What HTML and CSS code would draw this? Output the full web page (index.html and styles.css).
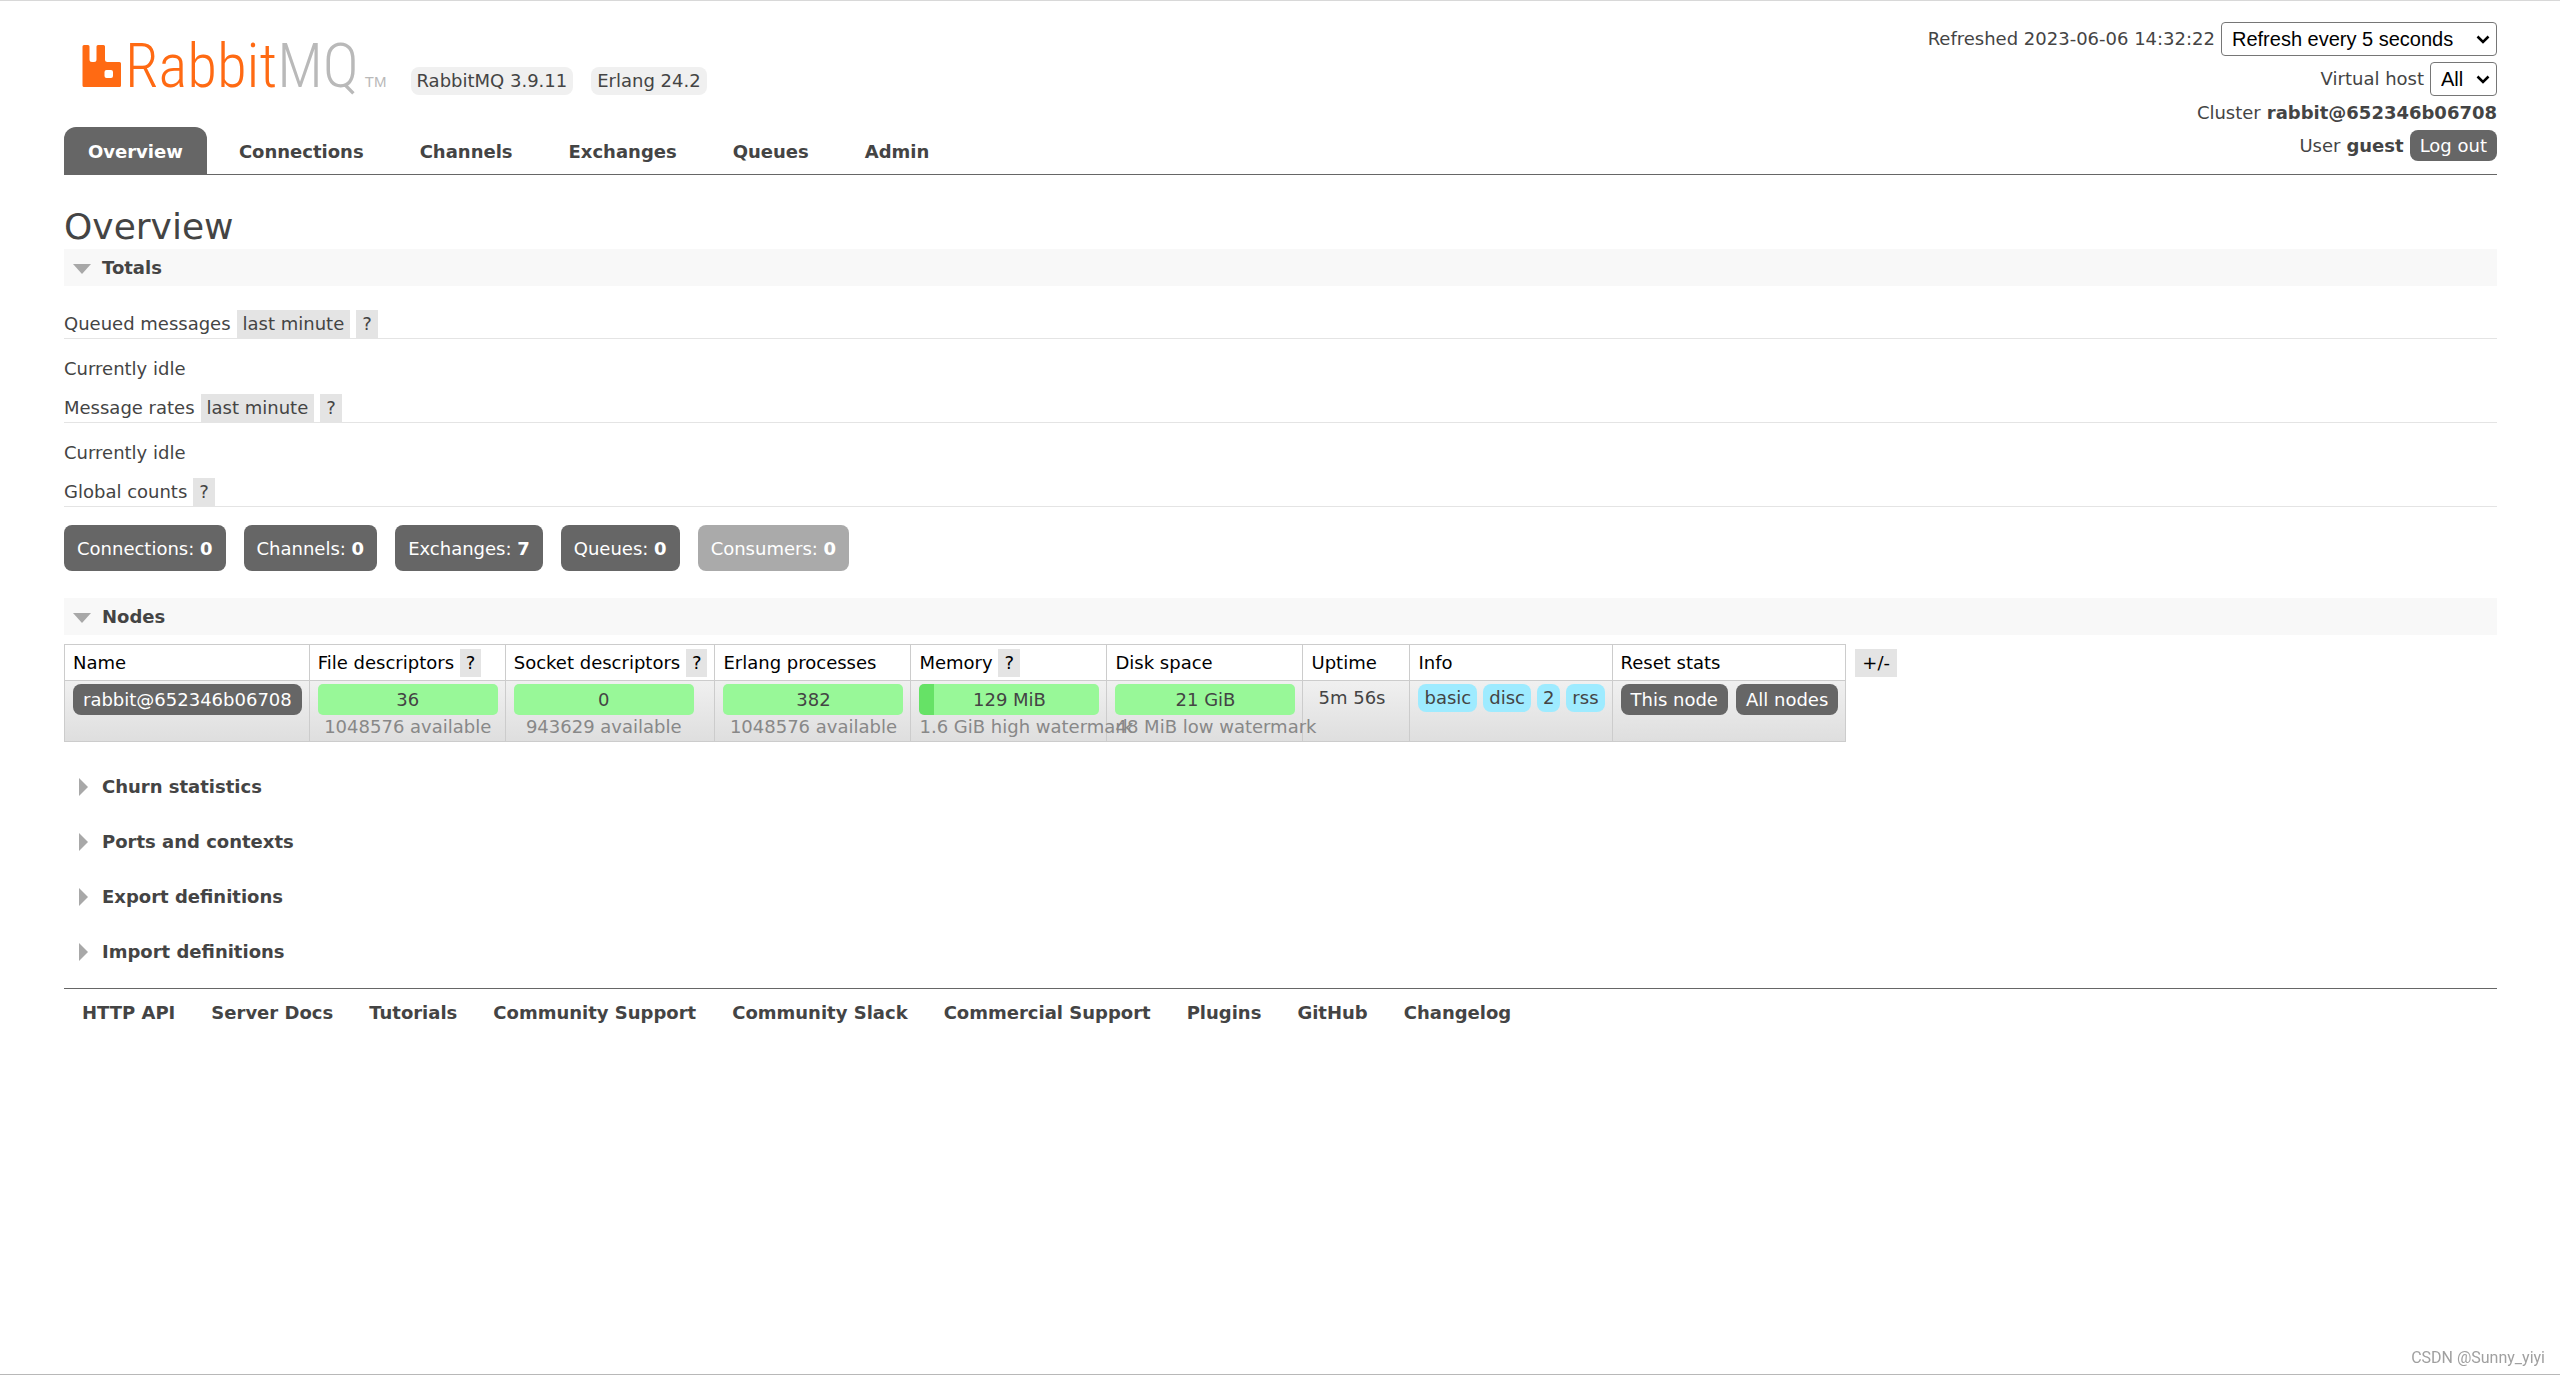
FILE: index.html
```html
<!DOCTYPE html>
<html lang="en">
<head>
<meta charset="utf-8">
<title>RabbitMQ Management</title>
<link rel="stylesheet" href="styles.css">
</head>
<body>
<header class="header">
  <div class="header-main">
    <div class="brand">
      <a class="logo" href="#" aria-label="RabbitMQ">
        <svg class="logo-icon" viewBox="0 0 40 42" width="40" height="42" aria-hidden="true">
          <path fill="#ff6a13" fill-rule="evenodd" d="M1.500 0h5.500q1.500 0 1.500 1.500v13q0 2.500 2.500 2.500h2q2.500 0 2.500-2.500v-13q0-1.500 1.500-1.500h5.500q1.500 0 1.500 1.500v13q0 2.500 2.500 2.500h12q1.500 0 1.500 1.500v22q0 1.500-1.500 1.500h-35.500q-1.500 0-1.500-1.500v-39q0-1.500 1.500-1.500zM25.500 25q-2 0-2 2v4q0 2 2 2h4.500q2 0 2-2v-4q0-2-2-2z"/>
        </svg>
        <span class="logo-text">Rabbit<span class="logo-mq">MQ</span></span>
        <span class="logo-tm">TM</span>
      </a>
      <ul class="versions">
        <li class="version">RabbitMQ 3.9.11</li>
        <li class="version">Erlang 24.2</li>
      </ul>
    </div>
    <nav class="tabs">
      <a class="tab tab-active" href="#">Overview</a>
      <a class="tab" href="#">Connections</a>
      <a class="tab" href="#">Channels</a>
      <a class="tab" href="#">Exchanges</a>
      <a class="tab" href="#">Queues</a>
      <a class="tab" href="#">Admin</a>
    </nav>
  </div>
  <div class="status">
    <div class="status-row">
      <label for="refresh">Refreshed 2023-06-06 14:32:22</label>
      <select class="select" id="refresh"><option>Refresh every 5 seconds</option></select>
    </div>
    <div class="status-row">
      <label for="vhost">Virtual host</label>
      <select class="select" id="vhost"><option>All</option></select>
    </div>
    <div class="status-row"><span>Cluster</span><b>rabbit@652346b06708</b></div>
    <div class="status-row"><span>User</span><b>guest</b><button class="button">Log out</button></div>
  </div>
</header>

<main>
  <h1 class="title">Overview</h1>

  <section class="section">
    <h2 class="section-title section-open"><button class="toggle" aria-expanded="true"><svg class="arrow" viewBox="0 0 18 18" aria-hidden="true"><path d="M0 5h18l-9 10z"/></svg>Totals</button></h2>
    <div class="totals">
      <h3 class="label">Queued messages <button class="chip">last minute</button><button class="chip">?</button></h3>
      <p class="idle">Currently idle</p>
      <h3 class="label">Message rates <button class="chip">last minute</button><button class="chip">?</button></h3>
      <p class="idle">Currently idle</p>
      <h3 class="label">Global counts <button class="chip">?</button></h3>
      <div class="counts">
        <a class="count" href="#">Connections: <b>0</b></a>
        <a class="count" href="#">Channels: <b>0</b></a>
        <a class="count" href="#">Exchanges: <b>7</b></a>
        <a class="count" href="#">Queues: <b>0</b></a>
        <span class="count count-disabled">Consumers: <b>0</b></span>
      </div>
    </div>
  </section>

  <section class="section">
    <h2 class="section-title section-open"><button class="toggle" aria-expanded="true"><svg class="arrow" viewBox="0 0 18 18" aria-hidden="true"><path d="M0 5h18l-9 10z"/></svg>Nodes</button></h2>
    <div class="nodes">
      <table class="table">
        <thead>
          <tr>
            <th>Name</th>
            <th>File descriptors <button class="chip">?</button></th>
            <th>Socket descriptors <button class="chip">?</button></th>
            <th>Erlang processes</th>
            <th>Memory <button class="chip">?</button></th>
            <th>Disk space</th>
            <th>Uptime</th>
            <th>Info</th>
            <th>Reset stats</th>
          </tr>
        </thead>
        <tbody>
          <tr>
            <td><a class="button" href="#">rabbit@652346b06708</a></td>
            <td><div class="meter"><div class="bar">36</div><div class="sub">1048576 available</div></div></td>
            <td><div class="meter"><div class="bar">0</div><div class="sub">943629 available</div></div></td>
            <td><div class="meter"><div class="bar">382</div><div class="sub">1048576 available</div></div></td>
            <td><div class="meter"><div class="bar bar-memory">129 MiB</div><div class="sub">1.6 GiB high watermark</div></div></td>
            <td><div class="meter"><div class="bar">21 GiB</div><div class="sub">48 MiB low watermark</div></div></td>
            <td class="uptime">5m 56s</td>
            <td><div class="tags"><span class="tag">basic</span><span class="tag">disc</span><span class="tag">2</span><span class="tag">rss</span></div></td>
            <td><div class="resets"><button class="button">This node</button><button class="button">All nodes</button></div></td>
          </tr>
        </tbody>
      </table>
      <button class="chip columns-toggle">+/-</button>
    </div>
  </section>

  <section class="section"><h2 class="section-title"><button class="toggle" aria-expanded="false"><svg class="arrow" viewBox="0 0 18 18" aria-hidden="true"><path d="M6 0v18l9-9z"/></svg>Churn statistics</button></h2></section>
  <section class="section"><h2 class="section-title"><button class="toggle" aria-expanded="false"><svg class="arrow" viewBox="0 0 18 18" aria-hidden="true"><path d="M6 0v18l9-9z"/></svg>Ports and contexts</button></h2></section>
  <section class="section"><h2 class="section-title"><button class="toggle" aria-expanded="false"><svg class="arrow" viewBox="0 0 18 18" aria-hidden="true"><path d="M6 0v18l9-9z"/></svg>Export definitions</button></h2></section>
  <section class="section"><h2 class="section-title"><button class="toggle" aria-expanded="false"><svg class="arrow" viewBox="0 0 18 18" aria-hidden="true"><path d="M6 0v18l9-9z"/></svg>Import definitions</button></h2></section>
</main>

<footer class="footer">
  <a href="#">HTTP API</a>
  <a href="#">Server Docs</a>
  <a href="#">Tutorials</a>
  <a href="#">Community Support</a>
  <a href="#">Community Slack</a>
  <a href="#">Commercial Support</a>
  <a href="#">Plugins</a>
  <a href="#">GitHub</a>
  <a href="#">Changelog</a>
</footer>
<div class="watermark">CSDN @Sunny_yiyi</div>
</body>
</html>
```
FILE: styles.css
```css
* {
  box-sizing: border-box;
}

body {
  margin: 0;
  min-height: 100vh;
  padding: 0 63px 0 64px;
  border-top: 1px solid #d8d8d8;
  border-bottom: 1px solid #b8b8b8;
  background: #fff;
  color: #444;
  font: 18px/22px Verdana, "DejaVu Sans", sans-serif;
}

h1, h2, h3, p, ul {
  margin: 0;
  padding: 0;
  font-weight: normal;
}

a {
  color: inherit;
  text-decoration: none;
}

button {
  border: 0;
  color: inherit;
  font: inherit;
  cursor: pointer;
}

/* Header */

.header {
  display: flex;
  justify-content: space-between;
  border-bottom: 1px solid #666;
}

.header-main {
  display: flex;
  flex-direction: column;
  justify-content: flex-end;
  gap: 32px;
}

.brand {
  display: flex;
  align-items: baseline;
  gap: 24px;
  padding-left: 17px;
}

.logo {
  display: flex;
  align-items: baseline;
  color: #ff6a13;
  font-family: "Roboto Condensed", "Open Sans Condensed", "Noto Sans Condensed", sans-serif;
  font-weight: 300;
}

.logo-text {
  margin-left: 4px;
  font-size: 61px;
  line-height: 42px;
}

.logo-mq,
.logo-tm {
  color: #b9b9b9;
}

.logo-tm {
  margin-left: 6px;
  font: 15px/18px "Liberation Sans", sans-serif;
}

.versions {
  display: flex;
  gap: 18px;
  list-style: none;
}

.version {
  padding: 3px 6px;
  border-radius: 8px;
  background: #f0f0f0;
}

.tabs {
  display: flex;
  gap: 8px;
}

.tab {
  padding: 14px 24px 11px;
  border-radius: 12px 12px 0 0;
  font-weight: bold;
}

.tab-active {
  background: #666;
  color: #fff;
}

.status {
  display: flex;
  flex-direction: column;
  gap: 6px;
  padding: 21px 0 13px;
}

.status-row {
  display: flex;
  align-items: center;
  justify-content: flex-end;
  gap: 6px;
}

.select {
  height: 34px;
  padding: 0 42px 0 10px;
  border: 1px solid #767676;
  border-radius: 4px;
  appearance: none;
  background: #fff url("data:image/svg+xml,%3Csvg xmlns='http://www.w3.org/2000/svg' width='14' height='9'%3E%3Cpath d='M1.500 1.500 7 7l5.500-5.500' fill='none' stroke='%23000' stroke-width='2.500'/%3E%3C/svg%3E") no-repeat right 6px center;
  color: #000;
  font: 20px/24px Arial, "Liberation Sans", sans-serif;
}

#vhost {
  padding-right: 32px;
}

.button {
  display: inline-block;
  padding: 5px 10px 4px;
  border-radius: 8px;
  background: #666;
  color: #fff;
  white-space: nowrap;
}

/* Sections */

.title {
  padding-top: 30px;
  font-size: 36px;
  line-height: 44px;
}

.section {
  margin-bottom: 18px;
}

.section-title {
  display: flex;
  font-size: 18px;
}

.section-open {
  background: #f8f8f8;
}

.toggle {
  display: flex;
  align-items: center;
  gap: 11px;
  padding: 8px 9px 7px;
  background: none;
  font-weight: bold;
}

.arrow {
  width: 18px;
  height: 18px;
  fill: #a8a8a8;
}

.totals {
  padding: 24px 0 9px;
}

.label {
  display: flex;
  gap: 6px;
  border-bottom: 1px solid #e4e4e4;
  font-size: 18px;
  line-height: 28px;
}

.chip {
  padding: 0 6px;
  background: #e4e4e4;
  line-height: 28px;
}

.idle {
  padding: 19px 0 14px;
}

.counts {
  display: flex;
  gap: 18px;
  padding-top: 18px;
}

.count {
  padding: 13px 13px 11px;
  border-radius: 8px;
  background: #666;
  color: #fff;
}

.count-disabled {
  background: #aaa;
}

/* Nodes table */

.nodes {
  display: flex;
  align-items: flex-start;
  gap: 9px;
  padding: 9px 0 8px;
}

.table {
  border-collapse: collapse;
}

.table th,
.table td {
  border: 1px solid #ccc;
  text-align: left;
  white-space: nowrap;
}

.table th {
  height: 36px;
  padding: 3px 7px 3px 8px;
  color: #000;
  font-weight: normal;
}

.table td {
  padding: 3px 7px 2px 8px;
  vertical-align: top;
}

.table tbody tr {
  background: linear-gradient(#f0f0f0, #dedede);
}

.meter {
  width: 180px;
}

.bar {
  border-radius: 5px;
  background: #98f898;
  line-height: 31px;
  text-align: center;
}

.bar-memory {
  background: linear-gradient(90deg, #66e266 15px, #98f898 15px);
}

.sub {
  color: #888;
  line-height: 24px;
  text-align: center;
}

.table .uptime {
  padding: 6px 24px 2px 15px;
}

.tags,
.resets {
  display: flex;
  gap: 6px;
}

.resets {
  gap: 8px;
}

.tag {
  padding: 3px 6px;
  border-radius: 8px;
  background: #9eebff;
}

.columns-toggle {
  margin-top: 5px;
  padding: 0 7px;
  color: #000;
}

/* Footer */

.footer {
  display: flex;
  flex-wrap: wrap;
  gap: 36px;
  padding: 13px 18px;
  border-top: 1px solid #666;
  font-weight: bold;
}

.watermark {
  position: fixed;
  right: 15px;
  bottom: 6px;
  color: #a0a0a0;
  font: 16px/22px Roboto, sans-serif;
}
```
